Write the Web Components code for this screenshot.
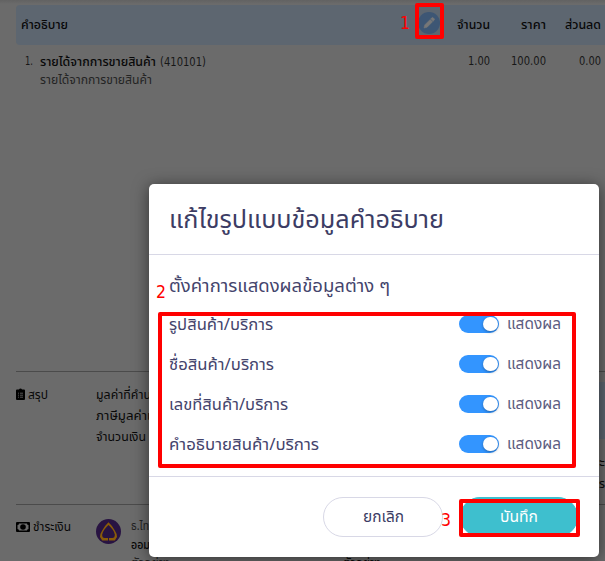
<!DOCTYPE html>
<html lang="th"><head><meta charset="utf-8"><title>Document</title>
<style>html,body{margin:0;width:605px;height:561px;overflow:hidden;background:#6b6b6b}</style></head><body>
<doc-app></doc-app>
<script>
const def=(name,html,after)=>customElements.define(name,class extends HTMLElement{
 connectedCallback(){if(this.shadowRoot)return;const r=this.attachShadow({mode:'open'});r.innerHTML=html;if(after)after(this,r)}
});
// A line of text set at a fixed advance width: w = width, s = font size, h = line height
def('fit-text',`<style>:host{display:block;flex:none;white-space:nowrap}span{display:inline-block;transform-origin:0 50%}</style><span><slot></slot></span>`,(el,r)=>{
 const w=+el.getAttribute('w');
 el.style.width=w+'px';
 el.style.fontSize=el.getAttribute('s')+'px';
 const h=el.getAttribute('h')||20;
 el.style.height=el.style.lineHeight=h+'px';
 const sp=r.querySelector('span');
 sp.style.transform='scaleX('+w/sp.getBoundingClientRect().width+')';
});
def('toggle-switch',`<style>:host{display:flex;width:40px;height:18px;border-radius:9px;background:#3395ff;box-sizing:border-box;padding:1.5px 1.5px;justify-content:flex-end}i{width:14.5px;height:14.5px;border-radius:50%;background:#fff;box-shadow:0 1px 3px #0005}</style><i></i>`);
def('setting-row',`<style>:host{display:flex;height:40px;align-items:center;color:#44446c}div{flex:1;padding-top:2px}fit-text{color:#5c5c80;padding-top:2px}toggle-switch{margin-right:8px}</style><div><slot></slot></div><toggle-switch></toggle-switch><fit-text w="54" s="15.5">แสดงผล</fit-text>`);
def('pill-button',`<style>:host{display:flex;box-sizing:border-box;width:120px;height:40px;border:1px solid #d8d8e6;border-radius:20px;align-items:center;justify-content:center;color:#3c3c64}:host([primary]){background:#3ebfce;border-color:#3ebfce;color:#fff;width:118px}</style><slot></slot>`);
def('mark-box',`<style>:host{position:absolute;box-sizing:border-box;border:4px solid #f00;border-radius:2px}</style>`);
def('mark-number',`<style>:host{position:absolute;color:#f00}</style><slot></slot>`);
def('item-table',`<style>:host{display:block;height:366px;color:#080808}
.head{display:flex;height:40px;background:#5d6670;border-radius:4px 0 0 4px;align-items:center;padding-left:5px}
.head fit-text{margin-top:-1px}
.sp{flex:1}.edit{width:22px;height:22px;margin-right:17px;margin-top:-5px}.row{display:flex;padding:7px 0 0 9px;line-height:18px}
.b{font-weight:500}.n{color:#171717;font-family:"DejaVu Sans",sans-serif}.g{color:#242424}</style>
<div class="head"><fit-text w="47" s="13" class="b">คำอธิบาย</fit-text><span class="sp"></span>
<svg class="edit" viewBox="0 0 22 22"><circle cx="11" cy="11" r="11" fill="#3d5674"/><path d="M6 16l.7-3.1 5.5-5.5 2.4 2.4-5.5 5.5zM12.8 6.8l1.2-1.2q.6-.4 1.2.1l1.1 1.1q.5.6.1 1.2l-1.2 1.2z" fill="#777" stroke="#777" stroke-width=".5"/></svg>
<fit-text w="33" s="13" class="b">จำนวน</fit-text><fit-text w="25" s="13" class="b" style="margin-left:31px">ราคา</fit-text><fit-text w="36" s="13" class="b" style="margin-left:19px;margin-right:4px">ส่วนลด</fit-text></div>
<div class="row"><fit-text class="n" w="8" s="11.5" h="18">1.</fit-text><div style="margin-left:7px"><div style="display:flex"><fit-text w="116" s="13" h="20" class="b">รายได้จากการขายสินค้า</fit-text><fit-text class="n" w="46" s="11.5" h="20" style="margin-left:4px">(410101)</fit-text></div><fit-text class="g" w="112" s="12.5" h="17">รายได้จากการขายสินค้า</fit-text></div><span class="sp"></span>
<fit-text class="n" w="22" s="11.5" h="18">1.00</fit-text><fit-text class="n" w="35" s="11.5" h="18" style="margin-left:21px">100.00</fit-text><fit-text class="n" w="22" s="11.5" h="18" style="margin:0 4px 0 33px">0.00</fit-text></div>`);
def('summary-section',`<style>:host{display:flex;height:133px;box-sizing:border-box;border-top:1px solid #4b4b4b;color:#080808;padding-top:13px}.lab{display:flex;width:80px;gap:3px}svg{width:9px;height:12px;margin-top:3px}.sp{flex:1}.side{width:6px;margin-top:-3px;text-align:left;overflow:hidden}.bar{height:57px;background:#5d6670;margin-bottom:14px}</style>
<div class="lab"><svg viewBox="0 0 9 12"><path d="M1 1.5h2a1.6 1.6 0 0 1 3 0h2q1 0 1 1V11q0 1-1 1H1q-1 0-1-1V2.5q0-1 1-1z"/><path d="M2 5.2h1M4 5.2h3M2 7.2h1M4 7.2h3M2 9.2h1M4 9.2h3" stroke="#6b6b6b" stroke-width=".8"/></svg><fit-text w="20" s="13">สรุป</fit-text></div>
<div><fit-text w="55" s="13" h="21">มูลค่าที่คำน</fit-text><fit-text w="55" s="13" h="21">ภาษีมูลค่าเ</fit-text><fit-text w="50" s="13" h="21">จำนวนเงิน</fit-text></div><span class="sp"></span>
<div class="side"><div class="bar"></div><fit-text w="6" s="12" h="21">ะ</fit-text><fit-text w="6" s="12" h="21">ร</fit-text></div>`);
def('payment-section',`<style>:host{display:flex;height:57px;box-sizing:border-box;border-top:1px solid #4b4b4b;color:#080808;padding-top:12px}.lab{display:flex;width:80px;gap:3px}.cash{width:14px;height:10px;margin-top:5px}.bank{width:25px;height:25px;margin:2px 10px 0 0}.g{color:#222}</style>
<div class="lab"><svg class="cash" viewBox="0 0 14 10"><rect width="14" height="10" rx="1"/><path d="M3 1.5h8q0 1.5 1.5 1.5v4Q11 7 11 8.5H3Q3 7 1.5 7V3Q3 3 3 1.5z" fill="#6b6b6b"/><circle cx="7" cy="5" r="2.8"/></svg><fit-text w="38" s="13">ชำระเงิน</fit-text></div>
<svg class="bank" viewBox="0 0 25 25"><circle cx="12.5" cy="12.5" r="12.5" fill="#281342"/><path d="M12 21.5H6.2L4 18q-.2-3 2.2-6.500Q8.500 7 12.500 3.300q4 3.700 6.300 8.200Q21.200 15 21 18l-2.200 3.500H13v-3h-1z" fill="#8a5c08"/><path d="M12.500 6Q7 11 6.200 15.500q-.2 3.500 2.600 3.500h7.400q2.800 0 2.600-3.500Q18 11 12.500 6z" fill="#281342"/><path d="M12 17h1v4h-1z" fill="#281342"/></svg>
<div style="width:212px"><fit-text class="g" w="18" s="13" h="19">ธ.ไท</fit-text><fit-text w="19" s="13" h="18" style="font-weight:500">ออม</fit-text><fit-text class="g" w="39" s="13" h="18">ตัวอย่าง</fit-text></div><div style="padding-top:37px"><fit-text w="38" s="13" h="18">ตัวอย่าง</fit-text></div>`);
def('settings-dialog',`<style>:host{position:absolute;left:149px;top:184px;width:450px;height:373px;border-radius:5px;background:#fff;box-shadow:0 2px 16px #0008;color:#44446c;display:flex;flex-direction:column}
header{height:71px;box-sizing:border-box;border-bottom:1px solid #d8d8e6;padding:19px 20px;color:#3c3c64}main{height:222px;box-sizing:border-box;border-bottom:1px solid #d8d8e6;padding:22px 38px 0 20px}.title{margin-bottom:7px}footer{display:flex;padding:19.5px 21px 0 174px;justify-content:space-between}</style>
<header><fit-text w="275" s="24.5" h="36">แก้ไขรูปแบบข้อมูลคำอธิบาย</fit-text></header>
<main><fit-text class="title" w="221" s="17.5" h="20">ตั้งค่าการแสดงผลข้อมูลต่าง ๆ</fit-text>
<setting-row><fit-text w="104" s="16.5">รูปสินค้า/บริการ</fit-text></setting-row><setting-row><fit-text w="105" s="16.5">ชื่อสินค้า/บริการ</fit-text></setting-row><setting-row><fit-text w="119" s="16.5">เลขที่สินค้า/บริการ</fit-text></setting-row><setting-row><fit-text w="150" s="16.5">คำอธิบายสินค้า/บริการ</fit-text></setting-row></main>
<footer><pill-button><fit-text w="41" s="16">ยกเลิก</fit-text></pill-button><pill-button primary><fit-text w="38" s="16">บันทึก</fit-text></pill-button></footer>`);
def('doc-app',`<style>:host{display:block;position:relative;width:605px;height:561px;box-sizing:border-box;overflow:hidden;padding:5px 0 0 16px;background:linear-gradient(#626262,#6b6b6b 4px);font-family:"Noto Sans Thai","Liberation Sans","DejaVu Sans",sans-serif}mark-number{font-family:"DejaVu Sans",sans-serif}</style>
<item-table></item-table><summary-section></summary-section><payment-section></payment-section><settings-dialog></settings-dialog>
<mark-box style="left:415px;top:3px;width:29px;height:36px"></mark-box><mark-box style="left:158px;top:312px;width:418px;height:156px"></mark-box><mark-box style="left:459px;top:499px;width:121px;height:38px"></mark-box>
<mark-number style="left:400px;top:13px"><fit-text w="10" s="17">1</fit-text></mark-number><mark-number style="left:156px;top:282px"><fit-text w="10" s="17">2</fit-text></mark-number><mark-number style="left:441px;top:510px"><fit-text w="10" s="17">3</fit-text></mark-number>`);
</script></body></html>
